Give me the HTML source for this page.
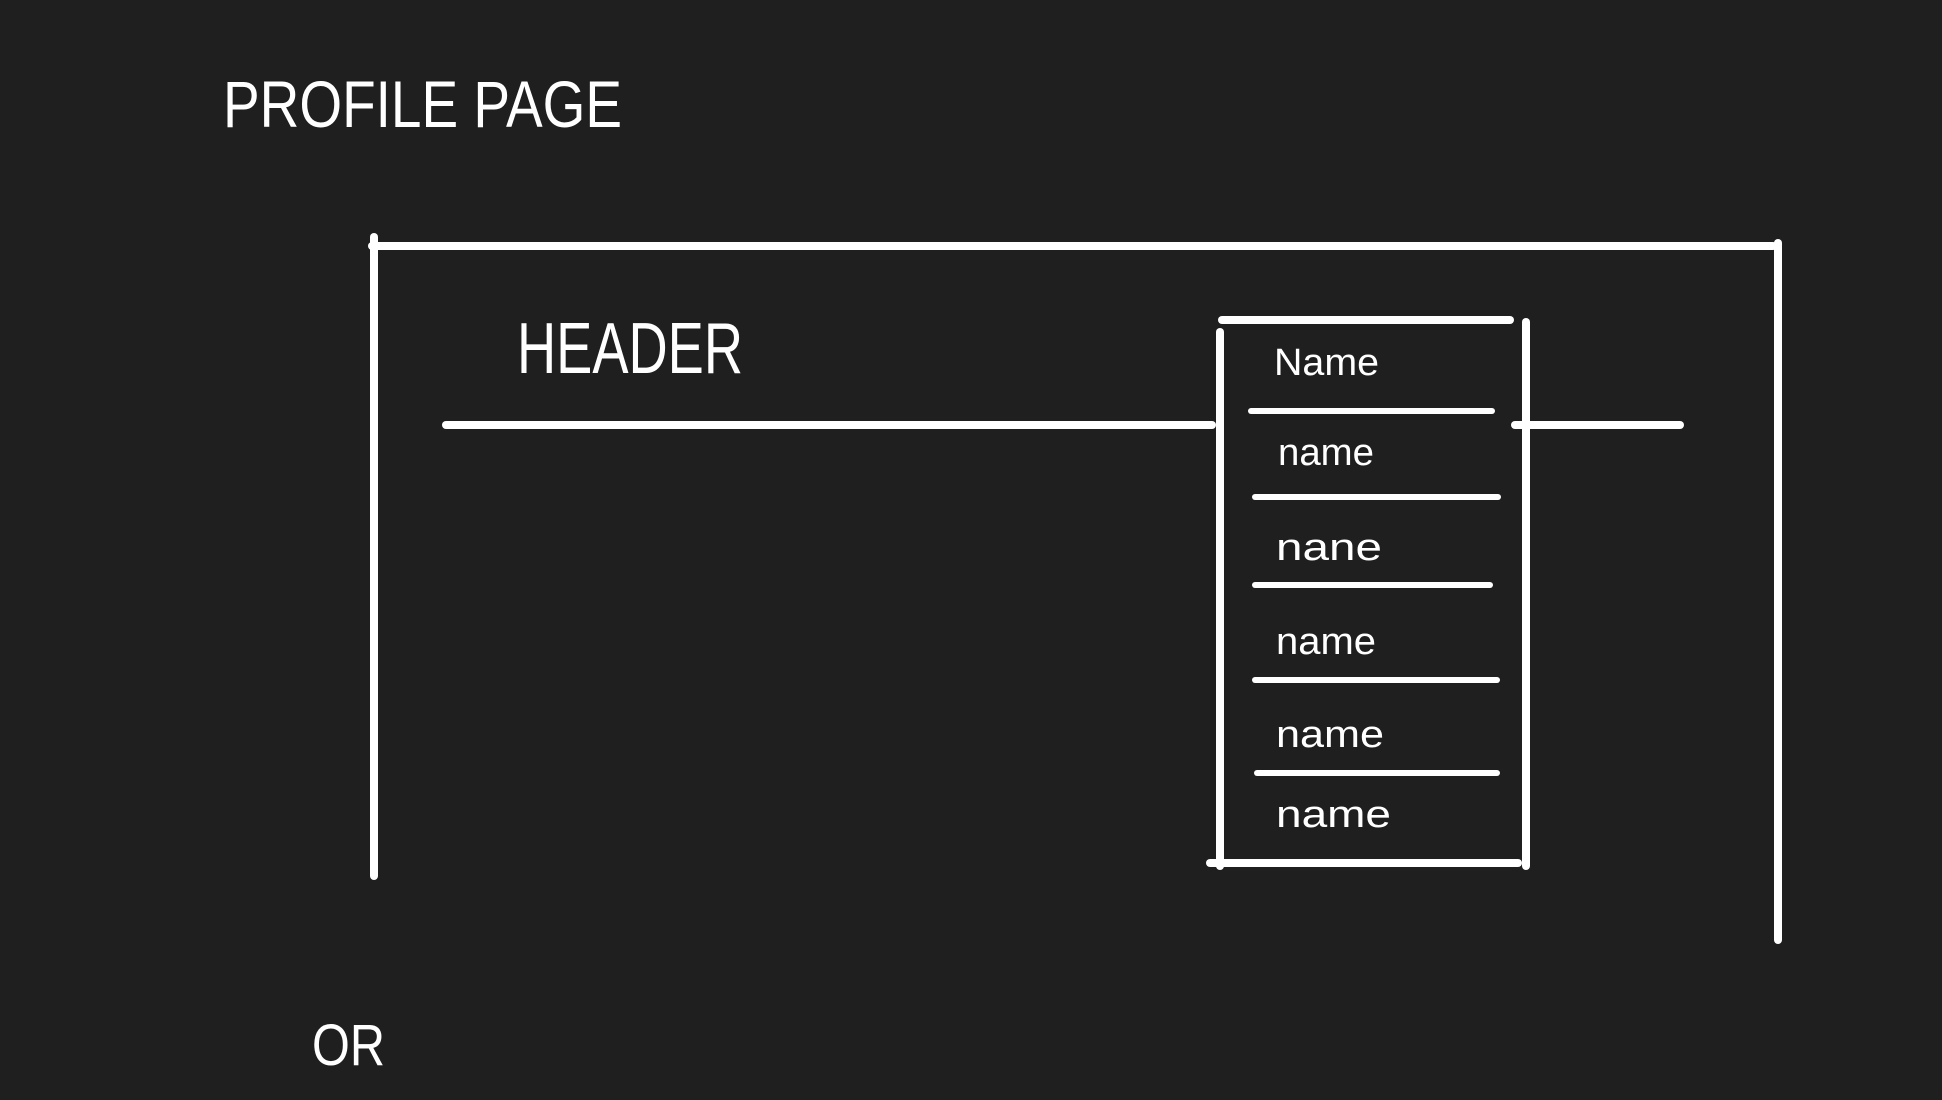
<!DOCTYPE html>
<html><head><meta charset="utf-8"><style>
html,body{margin:0;padding:0;background:#1f1f1f;width:1942px;height:1100px;overflow:hidden}
svg{display:block}
text{fill:#fff;font-family:"Liberation Sans",sans-serif}
</style></head><body>
<svg width="1942" height="1100" viewBox="0 0 1942 1100">
<g stroke="#fff" stroke-width="8" stroke-linecap="round" fill="none">
<line x1="372" y1="246" x2="1773" y2="246"/>
<line x1="374" y1="237" x2="374" y2="876"/>
<line x1="1778" y1="243" x2="1778" y2="940"/>
<line x1="446" y1="425" x2="1212" y2="425"/>
<line x1="1515" y1="425" x2="1680" y2="425"/>
<line x1="1222" y1="320" x2="1510" y2="320"/>
<line x1="1220" y1="332" x2="1220" y2="866"/>
<line x1="1526" y1="322" x2="1526" y2="866"/>
<line x1="1210" y1="863" x2="1518" y2="863"/>
<g stroke-width="6">
<line x1="1251" y1="411" x2="1492" y2="411"/>
<line x1="1255" y1="497" x2="1498" y2="497"/>
<line x1="1255" y1="585" x2="1490" y2="585"/>
<line x1="1255" y1="680" x2="1497" y2="680"/>
<line x1="1257" y1="773" x2="1497" y2="773"/>
</g>
</g>
<text x="223" y="127" font-size="66" textLength="399" lengthAdjust="spacingAndGlyphs">PROFILE PAGE</text>
<text x="517" y="373" font-size="72" textLength="226" lengthAdjust="spacingAndGlyphs">HEADER</text>
<text x="1274" y="375" font-size="38" textLength="105" lengthAdjust="spacingAndGlyphs">Name</text>
<text x="1278" y="465" font-size="38" textLength="96" lengthAdjust="spacingAndGlyphs">name</text>
<text x="1276" y="560" font-size="38" textLength="106" lengthAdjust="spacingAndGlyphs">nane</text>
<text x="1276" y="654" font-size="38" textLength="100" lengthAdjust="spacingAndGlyphs">name</text>
<text x="1276" y="747" font-size="38" textLength="108" lengthAdjust="spacingAndGlyphs">name</text>
<text x="1276" y="827" font-size="38" textLength="115" lengthAdjust="spacingAndGlyphs">name</text>
<text x="312" y="1065" font-size="58" textLength="73" lengthAdjust="spacingAndGlyphs">OR</text>
</svg>
</body></html>
